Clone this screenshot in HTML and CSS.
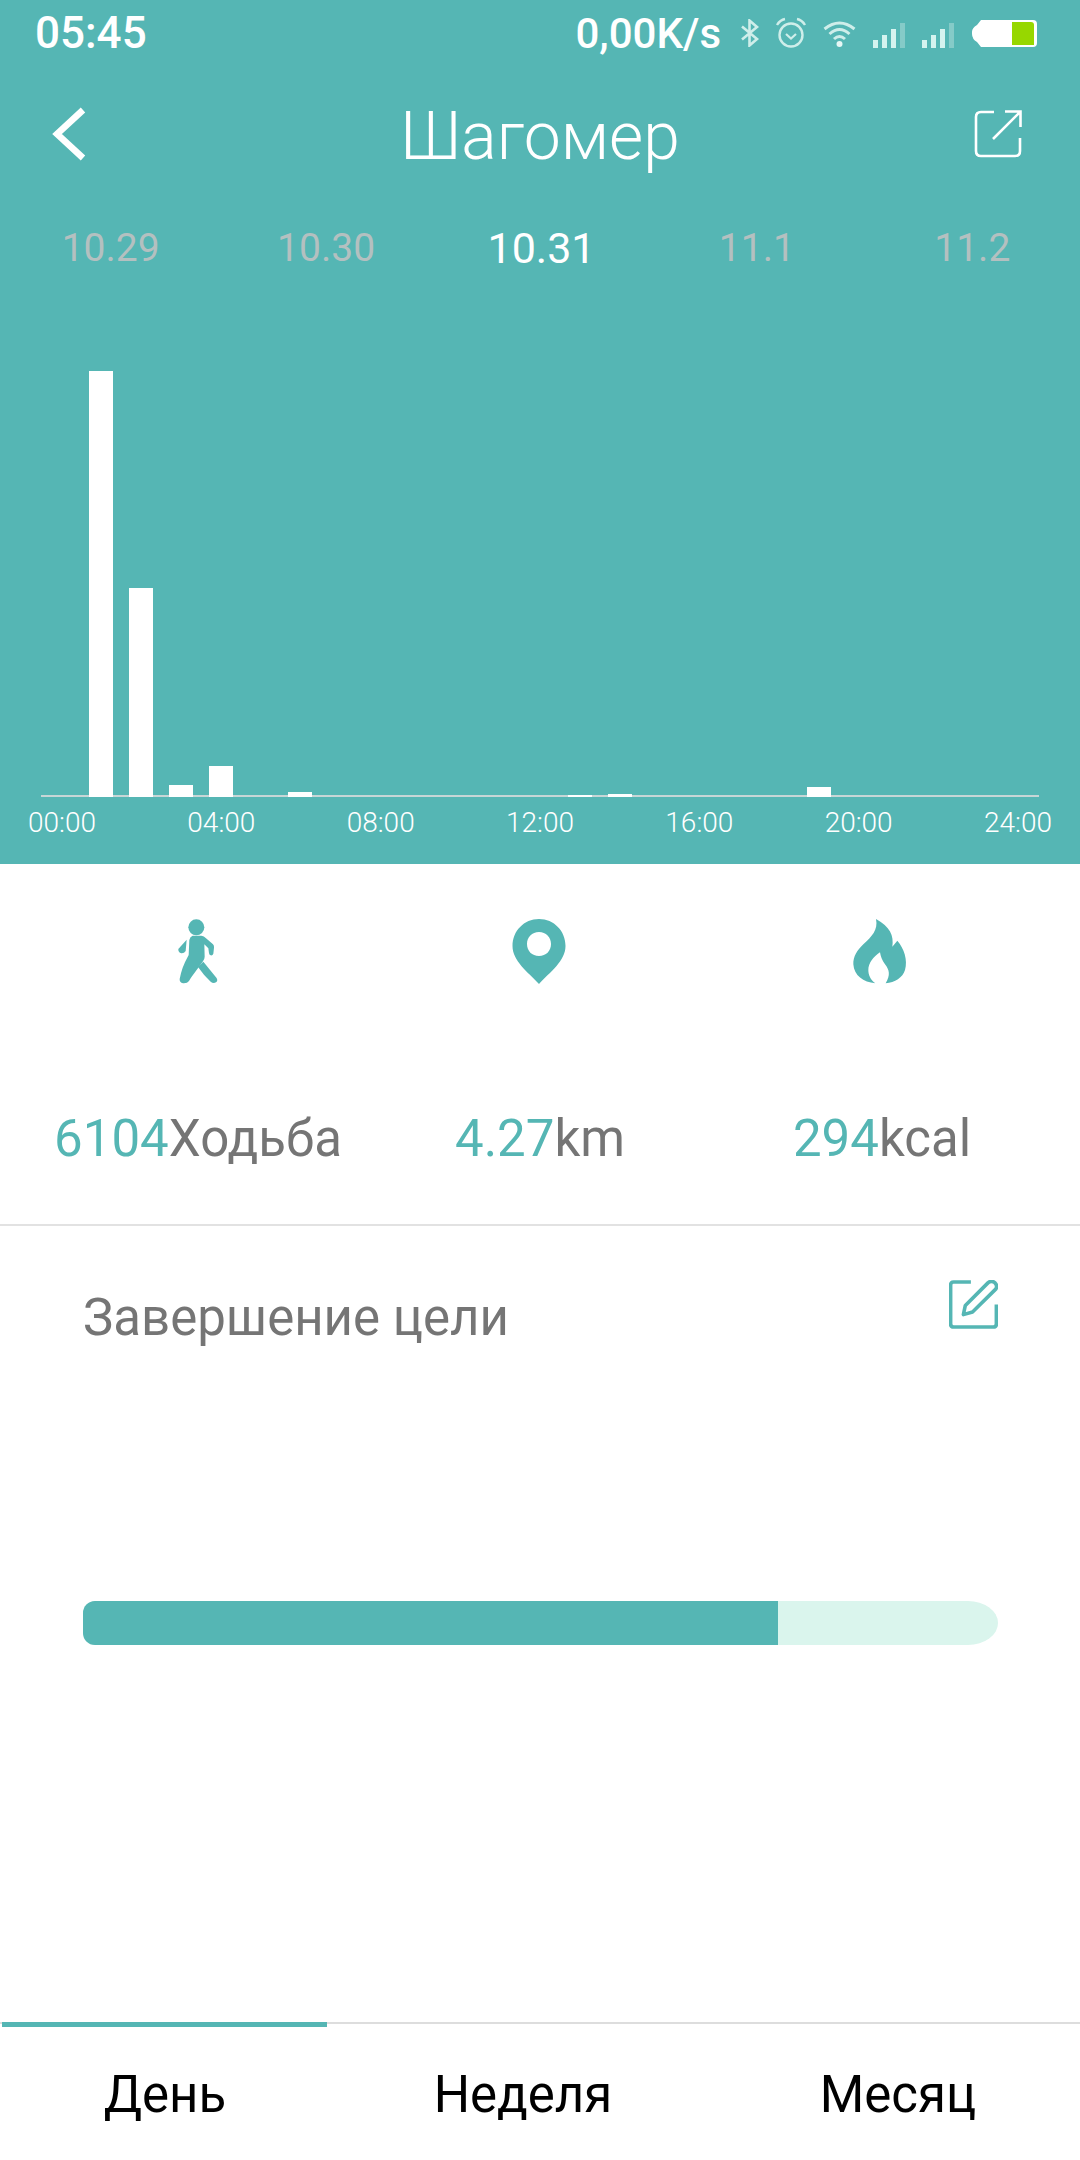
FILE: index.html
```html
<!DOCTYPE html>
<html lang="ru">
<head>
    <meta charset="UTF-8">
    <meta name="viewport" content="width=device-width, initial-scale=1.0">
    <title>Шагомер</title>
    <link rel="stylesheet" href="styles.css">
</head>
<body>
    <div class="page">
        <header class="top">
            <div class="status-bar">
                <span class="clock">05:45</span>
                <div class="status-right">
                    <span class="speed">0,00K/s</span>
                    <svg class="ic-bt" width="20" height="28" viewBox="0 0 20 28"><path d="M2 7.500 L17 20 L9.500 26.500 V1.500 L17 8 L2 20.500" fill="none" stroke="#cfeeea" stroke-width="2.6"/></svg>
                    <svg class="ic-alarm" width="32" height="32" viewBox="0 0 32 32">
                        <circle cx="16" cy="18" r="11.500" fill="none" stroke="#cfeeea" stroke-width="2.4"/>
                        <path d="M11 17 L16 21.500 L21 17" fill="none" stroke="#cfeeea" stroke-width="2.2"/>
                        <path d="M2 8 Q5 3 10 2 M22 2 Q27 3 30 8" fill="none" stroke="#cfeeea" stroke-width="2.4"/>
                    </svg>
                    <svg class="ic-wifi" width="33" height="27" viewBox="0 0 33 27">
                        <path d="M1.500 9 Q16.500 -3 31.500 9 M6.500 14 Q16.500 5 26.500 14 M11 19 Q16.500 14 22 19" fill="none" stroke="#cfeeea" stroke-width="3"/>
                        <circle cx="16.500" cy="24" r="3" fill="#e6f7f5"/>
                    </svg>
                    <div class="signal">
                        <i class="sig-1"></i><i class="sig-2"></i><i class="sig-3"></i><i class="sig-4 dim"></i>
                    </div>
                    <div class="signal">
                        <i class="sig-1"></i><i class="sig-2"></i><i class="sig-3"></i><i class="sig-4 dim"></i>
                    </div>
                    <svg class="ic-batt" width="67" height="29" viewBox="0 0 67 29">
                        <path d="M10 1 H62 Q66 1 66 5 V24 Q66 28 62 28 H10 L6 23 Q1 20 1 15 V13 Q1 9 6 6 Z" fill="#fff"/>
                        <path d="M41 3 H60 Q63 3 63 6 V26 H41 Z" fill="#97d700"/>
                    </svg>
                </div>
            </div>
            <div class="toolbar">
                <svg class="back" width="38" height="56" viewBox="0 0 38 56"><path d="M33 4 L7 28 L33 52" fill="none" stroke="#fff" stroke-width="6.5"/></svg>
                <h1>Шагомер</h1>
                <svg class="share" width="48" height="48" viewBox="0 0 48 48">
                    <path d="M20 2 H7 Q2 2 2 7 V41 Q2 46 7 46 H41 Q46 46 46 41 V28" fill="none" stroke="#fff" stroke-width="2.6"/>
                    <path d="M31 1.500 H46.500 V17 M46 2 L19 29" fill="none" stroke="#fff" stroke-width="2.6"/>
                </svg>
            </div>
            <div class="dates">
                <span>10.29</span>
                <span>10.30</span>
                <span class="active">10.31</span>
                <span>11.1</span>
                <span>11.2</span>
            </div>
            <div class="bars">
                <div></div>
                <div><i style="height:426px"></i></div>
                <div><i style="height:209px"></i></div>
                <div><i style="height:12px"></i></div>
                <div><i style="height:31px"></i></div>
                <div></div>
                <div><i style="height:5px"></i></div>
                <div></div>
                <div></div>
                <div></div>
                <div></div>
                <div></div>
                <div></div>
                <div><i style="height:2px"></i></div>
                <div><i style="height:3px"></i></div>
                <div></div>
                <div></div>
                <div></div>
                <div></div>
                <div><i style="height:10px"></i></div>
                <div></div>
                <div></div>
                <div></div>
                <div></div>
                <div></div>
            </div>
            <div class="hours">
                <span>00:00</span>
                <span>04:00</span>
                <span>08:00</span>
                <span>12:00</span>
                <span>16:00</span>
                <span>20:00</span>
                <span>24:00</span>
            </div>
        </header>

        <section class="stats">
            <div class="stat">
                <svg width="70" height="90" viewBox="-5 0 210 270">
                    <circle cx="95" cy="67" r="24" fill="#55b6b4"/>
                    <path d="M84 92 H110 Q118 93 124 100 L145 118 Q149 122 148 128 L146 146 Q144 152 138 151 Q133 150 133 144 L131 130 L119 118 L120 155 Q120 163 114 170 L81 215 Q76 222 73 228 Q68 236 55 235 Q44 232 45 222 Q48 205 54 188 Q60 172 72 150 L74 105 Q76 95 84 92 Z" fill="#55b6b4"/>
                    <path d="M116 170 L155 218 Q161 226 154 232 Q146 237 138 230 Q118 212 100 186 Z" fill="#55b6b4"/>
                    <path d="M66 104 L63 138 Q58 146 50 145 Q40 142 41 132 Z" fill="#55b6b4"/>
                </svg>
                <p class="value"><b>6104</b>Ходьба</p>
            </div>
            <div class="stat">
                <svg width="70" height="90" viewBox="1 -1 70 90">
                    <path fill-rule="evenodd" d="M35 13 C50 13 61.500 25 61.500 40 C61.500 55 46 66 35 78 C24 66 8.500 55 8.500 40 C8.500 25 20 13 35 13 Z M35 26 C28 26 23 31 23 38 C23 45 28 50 35 50 C42 50 47 45 47 38 C47 31 42 26 35 26 Z" fill="#55b6b4"/>
                </svg>
                <p class="value"><b>4.27</b>km</p>
            </div>
            <div class="stat">
                <svg width="80" height="90" viewBox="6 0 240 270">
                    <path d="M108 42 C150 65 162 92 157 125 L172 107 C192 130 204 165 195 195 C188 218 165 232 137 235 C152 210 148 195 135 178 C126 165 122 155 120 142 C100 155 85 175 85 195 C85 210 92 225 106 235 C70 232 42 212 40 178 C39 155 52 135 70 118 C95 95 115 75 108 42 Z" fill="#55b6b4"/>
                </svg>
                <p class="value"><b>294</b>kcal</p>
            </div>
        </section>

        <section class="goal">
            <div class="goal-head">
                <h2>Завершение цели</h2>
                <svg width="49" height="49" viewBox="0 0 150 150">
                    <path d="M67 6 H14 Q5 6 5 15 V135 Q5 144 14 144 H136 Q145 144 145 135 V75" fill="none" stroke="#55b6b4" stroke-width="11"/>
                    <path d="M44 106 L50 78 L120 8 Q130 0 140 8 Q150 18 143 28 L72 98 Z" fill="none" stroke="#55b6b4" stroke-width="11" stroke-linejoin="round"/>
                </svg>
            </div>
            <div class="progress">
                <div class="progress-fill"></div>
            </div>
        </section>

        <nav class="tabs">
            <span class="tab-marker"></span>
            <a href="#">День</a>
            <a href="#">Неделя</a>
            <a href="#">Месяц</a>
        </nav>
    </div>
</body>
</html>
```

FILE: styles.css
```css
body {
    margin: 0;
    background-color: #FFFFFF;
    font-family: 'Roboto', sans-serif;
}
h1, h2, p {
    margin: 0;
    font-weight: 400;
}
.page {
    display: flex;
    flex-direction: column;
    height: 2160px;
    overflow: hidden;
}

/* parte alta verde */
.top {
    height: 864px;
    background-color: #55B6B4;
    color: #FFFFFF;
}
.status-bar {
    display: flex;
    align-items: center;
    justify-content: space-between;
    height: 66px;
    padding: 0 42px 0 35px;
}
.clock {
    font-size: 44px;
    font-weight: 500;
}
.status-right {
    display: flex;
    align-items: center;
}
.speed {
    font-size: 42px;
    font-weight: 500;
    margin-right: 19px;
}
.ic-alarm {
    margin-left: 15px;
}
.ic-wifi {
    margin-left: 16px;
}
.signal {
    display: flex;
    align-items: flex-end;
    gap: 4px;
    height: 29px;
    margin-left: 17px;
}
.signal i {
    display: block;
    width: 5px;
    background-color: #D5F3EF;
}
.signal .dim {
    background-color: #85CBC8;
}
.sig-1 { height: 8px; }
.sig-2 { height: 13px; }
.sig-3 { height: 19px; }
.sig-4 { height: 25px; }
.ic-batt {
    margin-left: 17px;
}
.toolbar {
    display: grid;
    grid-template-columns: 1fr auto 1fr;
    align-items: center;
    height: 136px;
    padding: 0 58px 0 50px;
}
.toolbar .share {
    justify-self: end;
}
.toolbar h1 {
    padding: 5px 0 0 8px;
    font-size: 66px;
    font-weight: 300;
}
.dates {
    display: grid;
    grid-template-columns: repeat(5, 1fr);
    align-items: center;
    box-sizing: border-box;
    height: 90px;
    padding: 2px 0 0 3px;
    font-size: 39px;
    text-align: center;
    color: #B4C0C0;
}
.dates .active {
    font-size: 43px;
    color: #FFFFFF;
}
.bars {
    display: grid;
    grid-template-columns: repeat(25, 1fr);
    align-items: end;
    height: 505px;
    margin: 0 41px;
    background: linear-gradient(#C6D6D6, #C6D6D6) bottom / 100% 2px no-repeat;
}
.bars div {
    display: flex;
    justify-content: center;
    align-items: flex-end;
    height: 100%;
}
.bars i {
    display: block;
    width: 24px;
    background-color: #FFFFFF;
}
.hours {
    display: flex;
    justify-content: space-between;
    padding: 9px 28px 0;
    font-size: 28px;
    font-weight: 300;
}

/* contatori */
.stats {
    display: grid;
    grid-template-columns: repeat(3, 1fr);
    height: 360px;
    padding: 0 27px;
    border-bottom: 2px solid #E2E2E2;
}
.stat {
    display: flex;
    flex-direction: column;
    align-items: center;
    padding-top: 41px;
}
.value {
    margin-top: 114px;
    font-size: 51px;
    color: #757575;
    white-space: nowrap;
}
.value b {
    font-weight: 400;
    color: #55B6B4;
}

/* obiettivo */
.goal {
    padding: 0 82px 0 83px;
}
.goal-head {
    display: flex;
    justify-content: space-between;
    height: 375px;
    padding-top: 54px;
    box-sizing: border-box;
}
.goal-head h2 {
    font-size: 51px;
    color: #757575;
    margin-top: 8px;
}
.progress {
    height: 44px;
    background-color: #DAF5ED;
    border-radius: 12px 30px 30px 12px / 12px 22px 22px 12px;
    overflow: hidden;
}
.progress-fill {
    width: 695px;
    height: 100%;
    background-color: #55B6B4;
}

/* schede in basso */
.tabs {
    position: relative;
    display: flex;
    justify-content: space-around;
    align-items: center;
    box-sizing: border-box;
    height: 138px;
    padding-top: 4px;
    margin-top: auto;
    border-top: 2px solid #DDDDDD;
}
.tabs a {
    font-size: 51px;
    color: #000000;
    text-decoration: none;
}
.tab-marker {
    position: absolute;
    left: 2px;
    top: -2px;
    width: 325px;
    height: 5px;
    background-color: #55B6B4;
}
```
